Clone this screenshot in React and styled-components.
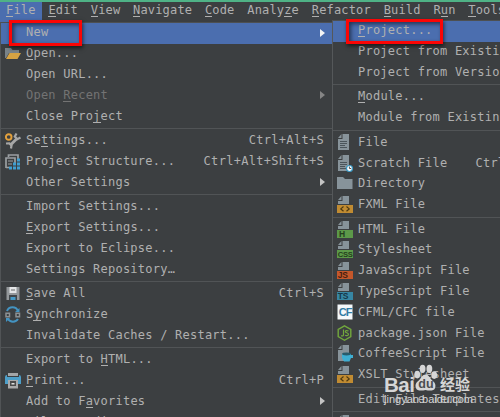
import React from "react";
import styled, { createGlobalStyle } from "styled-components";

const Global = createGlobalStyle`
  * { box-sizing: border-box; }
  body { margin: 0; background: #3c3f41; overflow: hidden; }
`;

const Screen = styled.div`
  width: 500px;
  height: 417px;
  overflow: hidden;
  position: relative;
  background: #3c3f41;
  color: #b0b0b0;
  border-top: 2px solid #4fb286;
  font: 12px/21px "DejaVu Sans Mono", monospace;
  letter-spacing: 0.23px;
  white-space: pre;
`;

const MenuBar = styled.nav`
  display: flex;
  height: 20px;
  width: 540px;
  letter-spacing: 0.16px;
`;

const MenuTitle = styled.div`
  flex: none;
  padding: 0 6.7px 0 6.1px;
  height: 20px;
  line-height: 17px;
  background: ${(p) => (p.$open ? "#4b6eaf" : "transparent")};
`;

const Menus = styled.div`
  display: flex;
  align-items: flex-start;
  width: 560px;
`;

const MainMenu = styled.div`
  width: 332px;
  flex: none;
  height: 398px;
  border-top: 1px solid #4d5052;
  border-left: 1px solid #515456;
`;

const SubMenu = styled.div`
  width: 228px;
  flex: none;
  height: 400px;
  margin-top: -2px;
  border-top: 1px solid #4d5052;
  border-left: 1px solid #55585a;
`;

const Row = styled.div`
  display: flex;
  align-items: center;
  height: 20.8px;
  line-height: 20px;
  padding-bottom: 2px;
  background: ${(p) => (p.$active ? "#4b6eaf" : "transparent")};
  color: ${(p) => (p.$dim ? "#737373" : "inherit")};
`;

const IconCell = styled.span`
  width: 25px;
  flex: none;
  height: 16px;
  padding-left: ${(p) => (p.$sub ? 4 : 4)}px;
  svg { display: block; margin-top: ${(p) => (p.$sub ? 0 : 1)}px; overflow: visible; }
`;

const Shortcut = styled.span`
  margin-left: ${(p) => (p.$sub ? "28px" : "auto")};
  padding-right: ${(p) => (p.$sub ? 0 : 8)}px;
  letter-spacing: ${(p) => (p.$sub ? 0.23 : 0.3)}px;
`;

const Arrow = styled.span`
  margin: 1px 7px 0 auto;
  border-left: 5.5px solid ${(p) => (p.$dim ? "#858585" : p.$active ? "#f4f4f4" : "#c4c4c4")};
  border-top: 4.5px solid transparent;
  border-bottom: 4.5px solid transparent;
`;

const Separator = styled.div`
  height: 3.7px;
  padding-top: 1px;
  &::before { content: ""; display: block; height: 1px; background: #515456; }
`;

const Mnemonic = styled.span`
  box-shadow: inset 0 -1px 0 currentColor;
  display: inline-block;
  height: 13px;
  line-height: 13px;
`;

const Callout = styled.div`
  position: absolute;
  border: 3px solid #fb0505;
  box-shadow: 1px 2px 4px #0009, inset 2px 2px 4px #0008;
  left: ${(p) => p.$x}px;
  top: ${(p) => p.$y}px;
  width: ${(p) => p.$w}px;
  height: ${(p) => p.$h}px;
`;

const Watermark = styled.div`
  position: absolute;
  left: 384px;
  top: 361px;
  width: 100px;
  height: 45px;
  color: #d6d6d6;
`;

const Brand = styled.div`
  display: flex;
  align-items: flex-end;
  height: 29px;
  letter-spacing: 0;
`;

const Latin = styled.span`
  font: bold 20.5px/19px "Liberation Sans", sans-serif;
  width: 29px;
  margin-bottom: -2px;
  letter-spacing: -0.5px;
`;

const Paw = styled.svg`
  flex: none;
  margin-bottom: 0;
`;

const Han = styled.span`
  font: bold 15px/17px "Noto Sans CJK SC", sans-serif;
  margin-left: 2px;
`;

const Site = styled.div`
  font: 11px/13px "Liberation Sans", sans-serif;
  margin-top: 1px;
  letter-spacing: 0.02px;
`;

const Label = ({ text }) => {
  const i = text.indexOf("_");
  if (i < 0) return <span>{text}</span>;
  return (
    <span>
      {text.slice(0, i)}
      <Mnemonic>{text[i + 1]}</Mnemonic>
      {text.slice(i + 2)}
    </span>
  );
};

const Svg = ({ children }) => (
  <svg width="16" height="16" viewBox="0 0 16 16">{children}</svg>
);

const Page = () => <path d="M5.500 0H12v16H1V5h4.500zM4.500 0v4H1z" fill="#87939a" />;
const PageLines = () => (
  <path d="M3 7.500h7M3 9.500h7M3 11.500h5M3 13.500h7" stroke="#4b555b" />
);

const tagged = (bg, ink, text) => (
  <Svg>
    <path d="M5.500 0H12v8H1V5h4.500zM4.500 0v4H1z" fill="#87939a" />
    <rect x="0" y="9" width="16" height="8" fill={bg} />
    {text === "<>" ? (
      <path d="M6.500 10.500 3.800 12.900 6.500 15.300M9.500 10.500l2.700 2.400-2.700 2.400" fill="none" stroke={ink} strokeWidth="1.2" />
    ) : (
      <text
        x={text === "H" ? 2 : 0.7}
        y="16"
        fontSize={text === "CSS" ? 7.6 : 8.5}
        fontFamily="Liberation Sans"
        fontWeight="bold"
        letterSpacing="-0.2"
        fill={ink}
      >
        {text}
      </text>
    )}
  </Svg>
);

const icons = {
  open: (
    <Svg>
      <path d="M0 2h6l1.500 2H14v3H4L1 12H0z" fill="#798389" />
      <path d="M4.500 7H16l-3.500 6H1z" fill="#d6a343" />
    </Svg>
  ),
  settings: (
    <Svg>
      <circle cx="3.700" cy="4" r="2.800" fill="none" stroke="#e3a13d" strokeWidth="1.900" />
      <path d="m5 12.500 6.500-6.500" stroke="#a7a7a7" strokeWidth="2.800" />
      <path d="M11.500 .5 9.800 3.500 12.300 6.200 15.500 4.500M1 10.500l3.500-.2 2 2L6 15.500" fill="none" stroke="#a7a7a7" strokeWidth="2.200" />
    </Svg>
  ),
  structure: (
    <Svg>
      <path d="M3.500 3V1H13v4M1 14V4h9v5M1 13.500h3" fill="none" stroke="#9a9fa2" strokeWidth="1.700" />
      <path d="M3 7h5M3 10h4" stroke="#9a9fa2" />
      <path d="M12 4.500h3v3h-3zM8 8.500h3v3H8zM12 8.500h3v3h-3zM4 12.500h3v3H4zM8 12.500h3v3H8zM12 12.500h3v3h-3z" fill="#3f9ed0" />
    </Svg>
  ),
  save: (
    <Svg>
      <path d="M1.500 1h13v13h-13z" fill="#94989b" />
      <path d="M4.500 1h7v6h-7z" fill="#e4e6e7" />
      <path d="M6 3h4v2H6z" fill="#a6a8a9" />
      <path d="M4 9h8v5H4z" fill="#41474b" />
      <path d="M5.500 11h5v3h-5z" fill="#469ac7" />
    </Svg>
  ),
  sync: (
    <Svg>
      <path d="M2 4C4-1 11-1 13 4M3 12c2 3.500 8 3.500 10 0" fill="none" stroke="#4393c1" strokeWidth="2" />
      <path d="M14.500 1v4H10zM1 15v-4h4z" fill="#4393c1" />
      <path d="M1 6.200h3.500v3.500H1zM11 6.200h3.500v3.500H11z" fill="#3c3f41" stroke="#8c9194" strokeWidth="1.500" />
    </Svg>
  ),
  print: (
    <Svg>
      <path d="M3 0h10v3H3z" fill="#a3a6a8" />
      <path d="M0 4q0-2 2-2v2h12V2q2 0 2 2v7H0z" fill="#4d9fc9" />
      <path d="M3 7h10v8.500H3z" fill="#aaa" />
      <path d="M5 8h6v5H5z" fill="#4a4a4a" />
      <path d="M6.500 10h3v1.500h-3z" fill="#ddd" />
    </Svg>
  ),
  file: <Svg><Page /><PageLines /></Svg>,
  scratch: (
    <Svg>
      <Page /><PageLines />
      <circle cx="12.500" cy="13.500" r="3" fill="#fff" stroke="#3999c5" strokeWidth="1.200" />
      <path d="M12.400 11.500v2h1.800" stroke="#555" fill="none" />
    </Svg>
  ),
  folder: <Svg><path d="M0 2h6l2 2h7.500v10H0z" fill="#87939a" /></Svg>,
  fxml: tagged("#c08b32", "#4d3912", "<>"),
  html: tagged("#5c9949", "#253f1d", "H"),
  css: tagged("#5c9949", "#253f1d", "CSS"),
  js: tagged("#c4572b", "#48200f", "JS"),
  ts: tagged("#3786a3", "#15384a", "TS"),
  cf: (
    <Svg>
      <rect x="0.500" y="0.500" width="15" height="15" fill="#f4f8fa" />
      <text x="1.800" y="12" fontSize="11" fontFamily="Liberation Sans" fontWeight="bold" letterSpacing="-1" fill="#327da5">CF</text>
    </Svg>
  ),
  node: (
    <Svg>
      <path d="m7.500.9 6.300 3.600v7.200l-6.300 3.600-6.300-3.600V4.500z" fill="none" stroke="#72a83d" strokeWidth="1.400" />
      <path d="M6.500 4.500v5.200q0 1.800-2.500 1M11.500 6Q8.200 4.800 8.400 6.800c.2 1.200 3.100.8 3.100 2.500 0 1.800-2.600 1.500-3.500.8" fill="none" stroke="#72a83d" strokeWidth="1.200" />
    </Svg>
  ),
  coffee: (
    <Svg>
      <Page />
      <path d="M5 9h9v1h2v3h-2l-1.500 3.500H7L5 13z" fill="#3faed2" />
      <ellipse cx="9.500" cy="9" rx="4.400" ry="1.400" fill="#285b6c" />
    </Svg>
  ),
};

const titles = [
  "_File", "_Edit", "_View", "_Navigate", "_Code", "Analy_ze", "_Refactor", "_Build", "R_un", "_Tools",
];

const mainItems = [
  { text: "New", active: true, arrow: true },
  { text: "_Open...", icon: "open" },
  { text: "Open URL..." },
  { text: "Open _Recent", dim: true, arrow: true },
  { text: "Close Pro_ject" },
  null,
  { text: "Se_ttings...", icon: "settings", keys: "Ctrl+Alt+S" },
  { text: "Project Structure...", icon: "structure", keys: "Ctrl+Alt+Shift+S" },
  { text: "Other Settings", arrow: true },
  null,
  { text: "Import Settings..." },
  { text: "_Export Settings..." },
  { text: "Export to Eclipse..." },
  { text: "Settings Repository…" },
  null,
  { text: "_Save All", icon: "save", keys: "Ctrl+S" },
  { text: "S_ynchronize", icon: "sync" },
  { text: "Invalidate Caches / Restart..." },
  null,
  { text: "Export to _HTML..." },
  { text: "_Print...", icon: "print", keys: "Ctrl+P" },
  { text: "Add to F_avorites", arrow: true },
  { text: "File Encoding" },
];

const newItems = [
  { text: "_Project...", active: true },
  { text: "Project from Existing Sources..." },
  { text: "Project from Version Control" },
  null,
  { text: "_Module..." },
  { text: "Module from Existing Sources..." },
  null,
  { text: "File", icon: "file" },
  { text: "Scratch File", icon: "scratch", keys: "Ctrl+Alt" },
  { text: "Directory", icon: "folder" },
  { text: "FXML File", icon: "fxml" },
  null,
  { text: "HTML File", icon: "html" },
  { text: "Stylesheet", icon: "css" },
  { text: "JavaScript File", icon: "js" },
  { text: "TypeScript File", icon: "ts" },
  { text: "CFML/CFC file", icon: "cf" },
  { text: "package.json File", icon: "node" },
  { text: "CoffeeScript File", icon: "coffee" },
  { text: "XSLT Stylesheet", icon: "fxml" },
  null,
  { text: "Edit File Templates..." },
  null,
  { text: "", icon: "file" },
];

const Items = ({ items, sub }) =>
  items.map((it, i) =>
    it === null ? (
      <Separator key={i} />
    ) : (
      <Row key={i} $active={it.active} $dim={it.dim}>
        <IconCell $sub={sub}>{icons[it.icon]}</IconCell>
        <Label text={it.text} />
        {it.keys && <Shortcut $sub={sub}>{it.keys}</Shortcut>}
        {it.arrow && <Arrow $dim={it.dim} $active={it.active} />}
      </Row>
    )
  );

export default function App() {
  return (
    <Screen>
      <Global />
      <MenuBar>
        {titles.map((t, i) => (
          <MenuTitle key={t} $open={i === 0}><Label text={t} /></MenuTitle>
        ))}
      </MenuBar>
      <Menus>
        <MainMenu><Items items={mainItems} /></MainMenu>
        <SubMenu><Items items={newItems} sub /></SubMenu>
      </Menus>
      <Callout $x={9} $y={18} $w={73} $h={26} />
      <Callout $x={346} $y={17} $w={97} $h={25} />
      <Watermark>
        <Brand>
          <Latin>Bai</Latin>
          <Paw width="25" height="28" viewBox="0 0 25 29">
            <g fill="#d6d6d6">
              <ellipse cx="4" cy="11" rx="3" ry="4" />
              <ellipse cx="9.5" cy="5" rx="3" ry="4.3" />
              <ellipse cx="16.5" cy="5" rx="3" ry="4.3" />
              <ellipse cx="21.5" cy="11.5" rx="3" ry="4" />
              <path d="M12.5 11c3 0 4 3 6.5 5.500C22 19 23.500 21 22.500 24.500 21.500 28 17 28 12.500 27 8 28 3.500 28 2.500 24.500 1.500 21 3 19 6 16.500 8.500 14 9.500 11 12.500 11z" />
            </g>
            <text x="5" y="25" fontSize="13" fontFamily="Liberation Sans" fontWeight="bold" letterSpacing="0" fill="#4b4e50">du</text>
          </Paw>
          <Han>经验</Han>
        </Brand>
        <Site>jingyan.baidu.com</Site>
      </Watermark>
    </Screen>
  );
}
